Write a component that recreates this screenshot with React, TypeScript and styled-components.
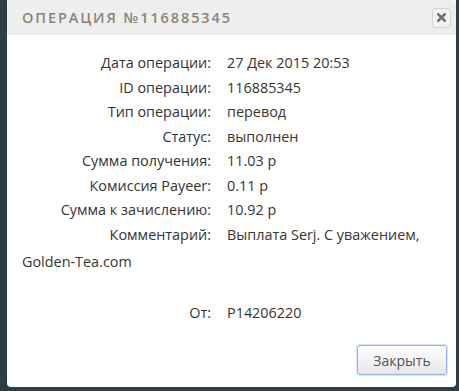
import React from 'react'
import styled, { createGlobalStyle } from 'styled-components'

const GlobalStyle = createGlobalStyle`
  html, body {
    margin: 0;
    padding: 0;
    background: #2f3d45;
  }
  body {
    font-family: 'Open Sans', 'Noto Sans', sans-serif;
  }
`

type Row = { label: string; value: string }

const rows: Row[] = [
  { label: 'Дата операции:', value: '27 Дек 2015 20:53' },
  { label: 'ID операции:', value: '116885345' },
  { label: 'Тип операции:', value: 'перевод' },
  { label: 'Статус:', value: 'выполнен' },
  { label: 'Сумма получения:', value: '11.03 р' },
  { label: 'Комиссия Payeer:', value: '0.11 р' },
  { label: 'Сумма к зачислению:', value: '10.92 р' },
  { label: 'Комментарий:', value: 'Выплата Serj. С уважением,' },
]

const App: React.FC = () => {
  return (
    <>
      <GlobalStyle />
      <Page>
        <Dialog>
          <Header>
            <Title>Операция №116885345</Title>
            <CloseIcon aria-label="close">
              <svg width="9" height="9" viewBox="0 0 9 9">
                <path
                  d="M1.3 1.3 L7.7 7.7 M7.7 1.3 L1.3 7.7"
                  stroke="#6f6f6f"
                  strokeWidth="2.6"
                  strokeLinecap="square"
                />
              </svg>
            </CloseIcon>
          </Header>
          <Body>
            {rows.map((r) => (
              <Line key={r.label}>
                <Label>{r.label}</Label>
                <Value>{r.value}</Value>
              </Line>
            ))}
            <Continued>Golden-Tea.com</Continued>
            <Line $gap={26}>
              <Label>От:</Label>
              <Value>P14206220</Value>
            </Line>
          </Body>
          <Footer>
            <Button>Закрыть</Button>
          </Footer>
        </Dialog>
      </Page>
    </>
  )
}

export default App

const Page = styled.div`
  width: 459px;
  height: 391px;
  padding-left: 7px;
  box-sizing: border-box;
`

const Dialog = styled.div`
  width: 449px;
  height: 387px;
  background: #fff;
  border-radius: 0 0 4px 4px;
  display: flex;
  flex-direction: column;
  overflow: hidden;
`

const Header = styled.div`
  height: 35px;
  background: #eeeeee;
  display: flex;
  align-items: center;
  justify-content: space-between;
  padding: 0 5px 0 15px;
  border-radius: 4px 4px 0 0;
`

const Title = styled.div`
  font-size: 14.5px;
  font-weight: 600;
  text-transform: uppercase;
  letter-spacing: 1.9px;
  color: #8c8376;
`

const CloseIcon = styled.div`
  width: 17px;
  height: 18px;
  border: 1px solid #d4d4d4;
  border-radius: 3px;
  background: #f2f2f2;
  display: flex;
  align-items: center;
  justify-content: center;
`

const Body = styled.div`
  flex: 1;
  padding: 16px 15px 0;
  font-size: 14.4px;
  color: #333;
`

const Line = styled.div<{ $gap?: number }>`
  display: flex;
  line-height: 24.5px;
  margin-top: ${({ $gap }) => $gap || 0}px;
`

const Label = styled.span`
  flex: 0 0 189px;
  margin-right: 16px;
  text-align: right;
  color: #333;
`

const Value = styled.span`
  color: #3a3530;
`

const Continued = styled.div`
  line-height: 24.5px;
  margin-top: 3px;
  color: #3a3530;
`

const Footer = styled.div`
  display: flex;
  justify-content: flex-end;
  padding: 0 9px 12px;
`

const Button = styled.button`
  width: 90px;
  height: 30px;
  font-family: inherit;
  font-size: 14px;
  color: #555;
  border: 1px solid #8fb4ef;
  border-radius: 3px;
  background: linear-gradient(#ffffff, #e6e6e6);
  box-shadow: 0 0 0 1px rgba(140, 180, 240, 0.35);
  cursor: pointer;
`
